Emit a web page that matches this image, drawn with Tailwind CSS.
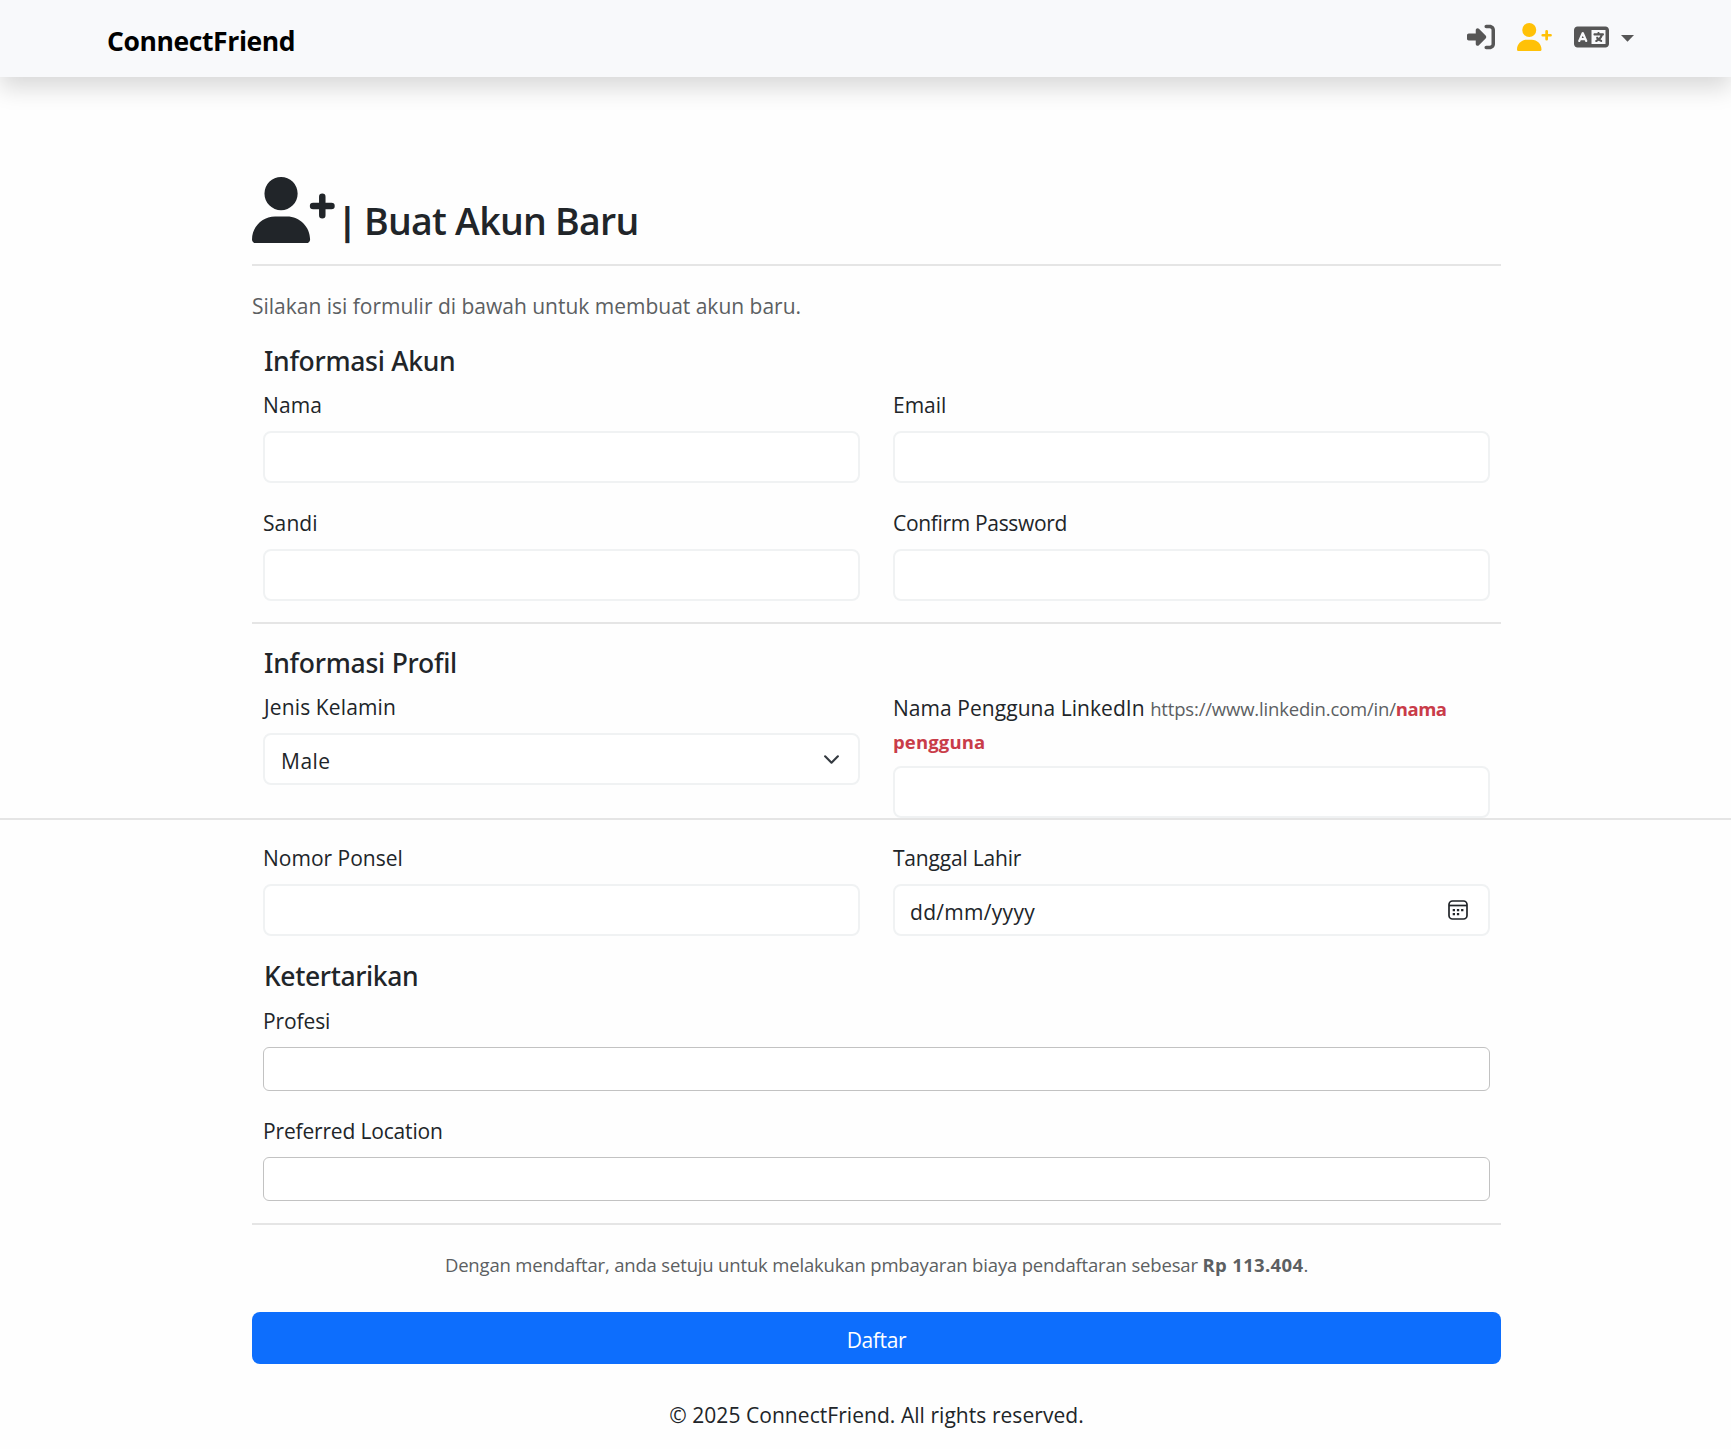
<!DOCTYPE html>
<html lang="id">
<head>
<meta charset="utf-8">
<title>ConnectFriend</title>
<script src="https://cdn.jsdelivr.net/npm/@tailwindcss/browser@4"></script>
</head>
<body class="relative h-[1449px] overflow-hidden bg-[#fefefe] font-['Open_Sans',sans-serif] text-[21px] leading-[36px] text-[#212529]">

<nav class="flex h-[77px] items-center justify-between bg-[#f8f9fb] pr-[97px] pl-[107px] shadow-[0_11px_22px_rgba(0,0,0,0.15)]">
  <a class="pt-[5px] text-[26.5px] leading-[36px] font-bold tracking-[-0.4px] text-black">ConnectFriend</a>
  <div class="flex items-center pb-[3px] text-[#565656]">
    <svg class="size-7" viewBox="0 0 512 512" fill="currentColor"><path d="M217.9 105.9L340.7 228.7c7.2 7.2 11.3 17.1 11.3 27.3s-4.1 20.1-11.3 27.3L217.9 406.1c-6.4 6.4-15 9.9-24 9.9c-18.7 0-33.9-15.2-33.9-33.9l0-62.1L32 320c-17.7 0-32-14.3-32-32l0-64c0-17.7 14.3-32 32-32l128 0 0-62.1c0-18.7 15.2-33.9 33.9-33.9c9 0 17.6 3.6 24 9.9zM352 416l64 0c17.7 0 32-14.3 32-32l0-256c0-17.7-14.3-32-32-32l-64 0c-17.7 0-32-14.3-32-32s14.3-32 32-32l64 0c53 0 96 43 96 96l0 256c0 53-43 96-96 96l-64 0c-17.7 0-32-14.3-32-32s14.3-32 32-32z"/></svg>
    <svg class="ml-[22px] h-7 w-[35px] text-[#ffc107]" viewBox="0 0 640 512" fill="currentColor"><path d="M96 128a128 128 0 1 1 256 0A128 128 0 1 1 96 128zM0 482.3C0 383.8 79.8 304 178.3 304l91.4 0C368.2 304 448 383.8 448 482.3c0 16.4-13.3 29.7-29.7 29.7L29.7 512C13.3 512 0 498.7 0 482.3z"/><path d="M471 224h142M542 153v142" stroke="currentColor" stroke-width="50" stroke-linecap="round"/></svg>
    <svg class="ml-[22px] h-7 w-[35px]" viewBox="0 0 640 512" fill="currentColor"><path d="M0 128C0 92.7 28.7 64 64 64l192 0 48 0 16 0 256 0c35.3 0 64 28.7 64 64l0 256c0 35.3-28.7 64-64 64l-256 0-16 0-48 0L64 448c-35.3 0-64-28.7-64-64L0 128zm320 0l0 256 256 0 0-256-256 0zM178.3 175.9c-3.2-7.2-10.4-11.9-18.3-11.9s-15.1 4.7-18.3 11.9l-64 144c-4.5 10.1 .1 21.9 10.2 26.4s21.9-.1 26.4-10.2l8.9-20.1 73.6 0 8.9 20.1c4.5 10.1 16.3 14.6 26.4 10.2s14.6-16.3 10.2-26.4l-64-144zM160 233.2L179 276l-38 0 19-42.8zM448 164c11 0 20 9 20 20l0 4 44 0 16 0c11 0 20 9 20 20s-9 20-20 20l-2 0-1.6 4.5c-8.9 24.4-22.4 46.6-39.6 65.4c.9 .6 1.8 1.1 2.7 1.6l18.9 11.3c9.5 5.7 12.5 18 6.9 27.4s-18 12.5-27.4 6.9l-18.9-11.3c-4.5-2.7-8.8-5.5-13.1-8.5c-10.6 7.5-21.9 14-34 19.4l-3.6 1.6c-10.1 4.5-21.9-.1-26.4-10.2s.1-21.9 10.2-26.4l3.6-1.6c6.4-2.9 12.6-6.1 18.5-9.8l-12.2-12.2c-7.8-7.8-7.8-20.5 0-28.3s20.5-7.8 28.3 0l14.6 14.6 .5 .5c12.4-13.1 22.5-28.3 29.8-45L448 228l-72 0c-11 0-20-9-20-20s9-20 20-20l52 0 0-4c0-11 9-20 20-20z"/></svg>
    <svg class="mt-[3px] ml-3 h-[7px] w-[13px]" viewBox="0 0 13 7" fill="currentColor"><path d="M0 0h13L6.500 6.700z"/></svg>
  </div>
</nav>

<main class="ml-[252px] w-[1249px]">
  <header class="flex h-[189px] items-end border-b-2 border-[#e5e5e5] pb-[20px]">
    <svg class="mb-px h-[66.4px] w-[83px]" viewBox="0 0 640 512" fill="currentColor"><path d="M96 128a128 128 0 1 1 256 0A128 128 0 1 1 96 128zM0 482.3C0 383.8 79.8 304 178.3 304l91.4 0C368.2 304 448 383.8 448 482.3c0 16.4-13.3 29.7-29.7 29.7L29.7 512C13.3 512 0 498.7 0 482.3z"/><path d="M471 224h142M542 153v142" stroke="currentColor" stroke-width="50" stroke-linecap="round"/></svg>
    <h1 class="flex text-[37.5px] leading-[46px] font-semibold tracking-[-0.75px]"><span class="w-[29px] pr-[5px] text-center font-bold">|</span><span>Buat Akun Baru</span></h1>
  </header>
  <p class="mt-[22px] h-[33px] tracking-[-0.01px] text-[#5c5f62]">Silakan isi formulir di bawah untuk membuat akun baru.</p>

  <form>
    <section class="px-[11px] pt-[23px]">
      <h2 class="pl-px font-['Noto_Sans','Open_Sans',sans-serif] text-[26.5px] leading-[34px] font-medium tracking-[-0.29px]">Informasi Akun</h2>
      <div class="mt-[9px] grid grid-cols-[597px_597px] gap-x-[33px]">
        <div><label class="mb-[8px] block tracking-[0.1px]">Nama</label><div class="h-[52px] rounded-lg border-2 border-[#f0f2f3] bg-white"></div></div>
        <div><label class="mb-[8px] block">Email</label><div class="h-[52px] rounded-lg border-2 border-[#f0f2f3] bg-white"></div></div>
        <div class="mt-[22px]"><label class="mb-[8px] block tracking-[0.1px]">Sandi</label><div class="h-[52px] rounded-lg border-2 border-[#f0f2f3] bg-white"></div></div>
        <div class="mt-[22px]"><label class="mb-[8px] block tracking-[-0.32px]">Confirm Password</label><div class="h-[52px] rounded-lg border-2 border-[#f0f2f3] bg-white"></div></div>
      </div>
    </section>

    <hr class="mt-[21px] border-t-2 border-[#e5e5e5]">

    <section class="px-[11px] pt-[22px]">
      <h2 class="pl-px font-['Noto_Sans','Open_Sans',sans-serif] text-[26.5px] leading-[34px] font-medium tracking-[-0.24px]">Informasi Profil</h2>
      <div class="mt-[9px] grid grid-cols-[597px_597px] gap-x-[33px]">
        <div>
          <label class="mb-[8px] block pl-px tracking-[0.13px]">Jenis Kelamin</label>
          <div class="flex h-[52px] items-center justify-between rounded-lg border-2 border-[#f0f2f3] bg-white pr-[18px] pl-4">
            <span class="pt-[3px] tracking-[0.5px]">Male</span>
            <svg class="size-[17px]" viewBox="0 0 16 16" fill="none" stroke="#343a40" stroke-width="2" stroke-linecap="round" stroke-linejoin="round"><path d="m2 5 6 6 6-6"/></svg>
          </div>
        </div>
        <div>
          <label class="mb-[8px] block pt-[3px] leading-[33px] tracking-[0.05px]">Nama Pengguna LinkedIn <small class="text-[18.5px] leading-none tracking-[-0.18px] text-[#5c5f62]">https://www.linkedin.com/in/<b class="tracking-[-0.5px] text-[#c93c49]">nama</b><br><b class="tracking-[0.15px] text-[#c93c49]">pengguna</b></small></label>
          <div class="h-[52px] rounded-lg border-2 border-[#f0f2f3] bg-white"></div>
        </div>
        <div class="mt-[22px]"><label class="mb-[8px] block">Nomor Ponsel</label><div class="h-[52px] rounded-lg border-2 border-[#f0f2f3] bg-white"></div></div>
        <div class="mt-[22px]">
          <label class="mb-[8px] block tracking-[-0.2px]">Tanggal Lahir</label>
          <div class="flex h-[52px] items-center justify-between rounded-lg border-2 border-[#f0f2f3] bg-white pr-[20px] pl-[15px]">
            <span class="pt-[3px] tracking-[0.3px]">dd/mm/yyyy</span>
            <svg class="size-5" viewBox="0 0 20 20" fill="none" stroke="#212529" stroke-width="1.700"><rect x="1" y="1" width="18" height="18" rx="3.500"/><path d="M1 5.500h18"/><path stroke="none" fill="#212529" d="M4.700 9h2.300v2.300H4.700zM8.900 9h2.300v2.300H8.900zM13.100 9h2.300v2.300h-2.300zM4.700 13h2.300v2.300H4.700zM8.900 13h2.300v2.300H8.900z"/></svg>
          </div>
        </div>
      </div>
    </section>

    <section class="px-[11px] pt-[23px]">
      <h2 class="pl-px font-['Noto_Sans','Open_Sans',sans-serif] text-[26.5px] leading-[34px] font-medium tracking-[-0.38px]">Ketertarikan</h2>
      <label class="mt-[10px] mb-[8px] block tracking-[-0.1px]">Profesi</label>
      <div class="h-[44px] w-[1227px] rounded-[6px] border-[1.500px] border-[#c2c2c2] bg-white"></div>
      <label class="mt-[22px] mb-[8px] block tracking-[-0.17px]">Preferred Location</label>
      <div class="h-[44px] w-[1227px] rounded-[6px] border-[1.500px] border-[#c2c2c2] bg-white"></div>
    </section>

    <hr class="mt-[22px] border-t-2 border-[#e5e5e5]">
    <p class="mt-[22px] text-center text-[18.5px] tracking-[-0.17px] text-[#5c5f62]">Dengan mendaftar, anda setuju untuk melakukan pmbayaran biaya pendaftaran sebesar <b class="tracking-[0.35px]">Rp 113.404</b>.</p>
    <button type="button" class="mt-[29px] block h-[52px] w-full rounded-lg bg-[#0d6efd] pt-[3px] tracking-[-0.33px] text-white">Daftar</button>
  </form>
</main>

<footer class="mt-[33px] ml-[252px] w-[1249px] text-center tracking-[0.05px]">© 2025 ConnectFriend. All rights reserved.</footer>

<!-- Divider spanning the full viewport width -->
<div class="absolute top-[818px] left-0 h-[2px] w-full bg-[#e5e5e5]"></div>
</body>
</html>
